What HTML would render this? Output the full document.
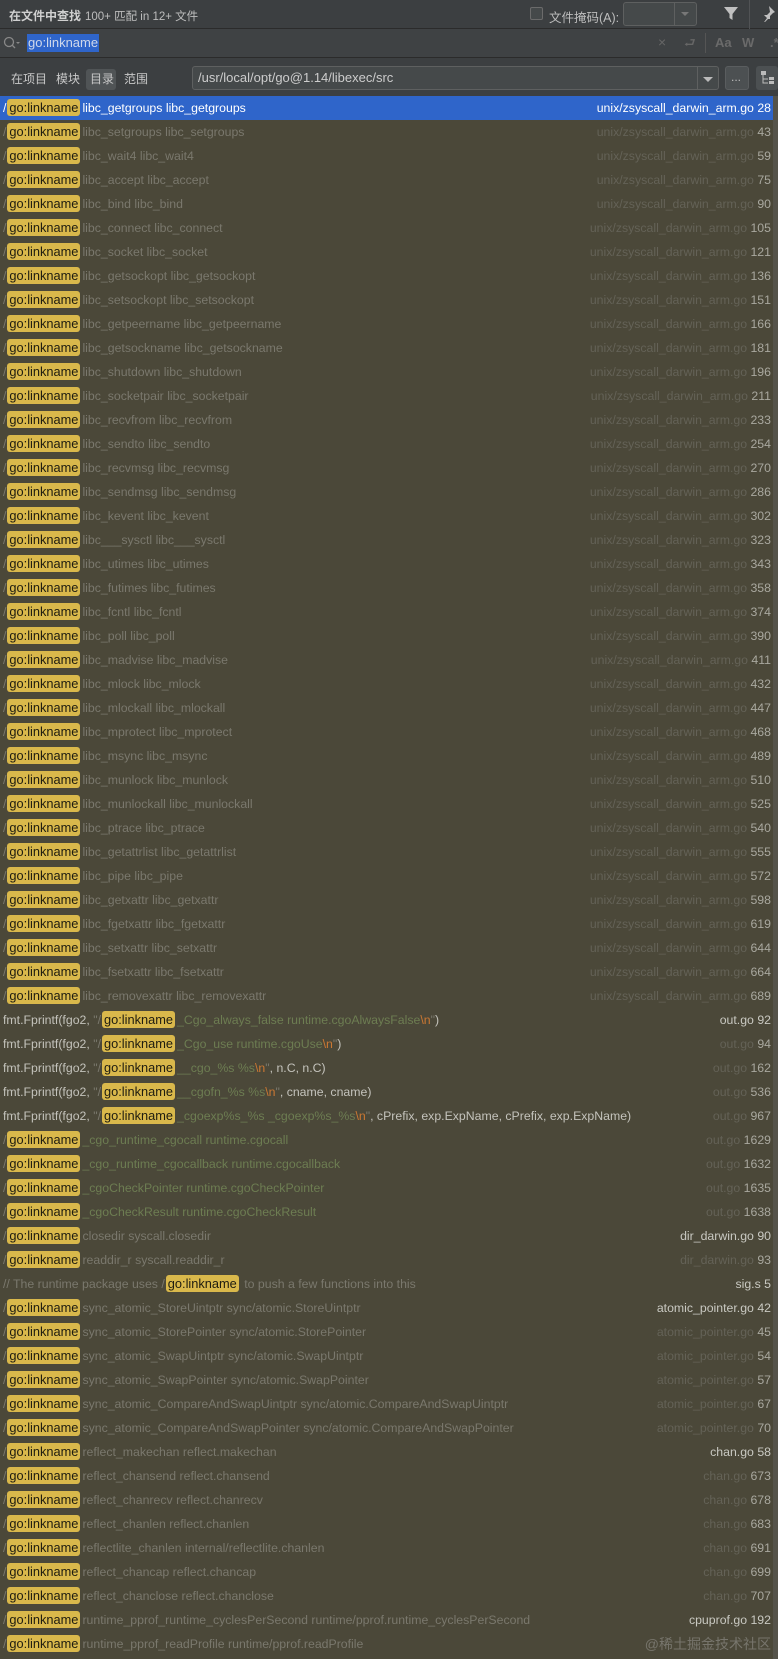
<!DOCTYPE html>
<html><head><meta charset="utf-8"><style>
*{margin:0;padding:0;box-sizing:border-box}
body{width:778px;height:1659px;background:#4b4839;font-family:"Liberation Sans","Noto Sans CJK SC",sans-serif;overflow:hidden;position:relative;color:#bbb}
.hd{position:absolute;left:0;top:0;width:778px;height:29px;background:#3c3f41;border-bottom:1px solid #2b2b2b}
.sr{position:absolute;left:0;top:29px;width:778px;height:29px;background:#3f4244;border-bottom:1px solid #2b2b2b}
.sc{position:absolute;left:0;top:58px;width:778px;height:38px;background:#3c3f41}
.a{position:absolute;white-space:nowrap}
.list{position:absolute;left:0;top:96px;width:773px}
.sb{position:absolute;left:773px;top:96px;width:5px;height:1563px;background:#55534a}
.r{height:24px;line-height:24px;font-size:12.3px;white-space:nowrap;position:relative;color:#7a786d;padding-left:3px}
.r .f{position:absolute;right:2px;top:0;color:#646257}
.r .f i{font-style:normal;color:#a9a89f}
.r .f.w{color:#c9c9c2}
.r .f.w i{color:#c9c9c2}
b{font-weight:normal;background:#d9b84b;color:#1e1c10;border-radius:3px;padding:1px 2px;margin:0 2px 0 1px;font-size:12.8px}
.sel{background:#2f65ca;color:#fff}
.sel .f,.sel .f i{color:#fff}
.k{color:#c4c3bc}.g{color:#6d7d52}.o{color:#cc7832}
</style></head><body>
<div class="hd">
<span class="a" style="left:9px;top:7px;font-size:12px;font-weight:bold;color:#d0d0d0">在文件中查找</span>
<span class="a" style="left:85px;top:8px;font-size:11.5px;color:#bdbdbd">100+ 匹配 in 12+ 文件</span>
<span class="a" style="left:530px;top:7px;width:13px;height:13px;border:1px solid #6b6b6b;border-radius:2px;background:#45494a"></span>
<span class="a" style="left:549px;top:7px;font-size:12.5px;color:#bdbdbd">文件掩码(A):</span>
<span class="a" style="left:623px;top:2px;width:74px;height:24px;border:1px solid #5e6060;border-radius:3px;background:#45494a"></span>
<span class="a" style="left:674px;top:3px;width:1px;height:22px;background:#5e6060"></span>
<span class="a" style="left:681px;top:12px;border-left:4px solid transparent;border-right:4px solid transparent;border-top:4px solid #777"></span>
<svg class="a" style="left:724px;top:6px" width="14" height="15" viewBox="0 0 14 15"><path d="M0 1h14L8.5 8v6L5.5 12V8z" fill="#c0c0c0"/></svg>
<span class="a" style="left:749px;top:0;width:1px;height:29px;background:#515355"></span>
<svg class="a" style="left:760px;top:5px" width="16" height="17" viewBox="0 0 16 17"><path d="M9 1l6 6-2 1-3 3 0 3-2 0-6 6 5-7-3-3 3 0 3-3z" fill="#c0c0c0"/></svg>
</div>
<div class="sr">
<svg class="a" style="left:3px;top:7px" width="18" height="14" viewBox="0 0 18 14"><circle cx="6" cy="6" r="4.5" stroke="#888" stroke-width="1.3" fill="none"/><path d="M9 9l3 3" stroke="#888" stroke-width="1.3"/><path d="M13 6h4l-2 2z" fill="#888"/></svg>
<span class="a" style="left:27px;top:5px;height:18px;line-height:18px;padding:0 1px;font-size:13px;background:#2f65ca;color:#cfd8ea">go:linkname</span>
<span class="a" style="left:658px;top:5px;font-size:14px;color:#666">×</span>
<span class="a" style="left:684px;top:5px;font-size:13px;color:#666">⮐</span>
<span class="a" style="left:705px;top:4px;width:1px;height:20px;background:#555"></span>
<span class="a" style="left:715px;top:6px;font-size:13px;font-weight:bold;color:#6a6a6a">Aa</span>
<span class="a" style="left:742px;top:6px;font-size:13px;font-weight:bold;color:#6a6a6a">W</span>
<span class="a" style="left:770px;top:6px;font-size:13px;font-weight:bold;color:#6a6a6a">.*</span>
</div>
<div class="sc">
<span class="a" style="left:11px;top:12px;font-size:12px;color:#c8c8c8">在项目</span>
<span class="a" style="left:56px;top:12px;font-size:12px;color:#c8c8c8">模块</span>
<span class="a" style="left:86px;top:11px;width:30px;height:21px;background:#505456;border-radius:3px"></span>
<span class="a" style="left:90px;top:12px;font-size:12px;color:#c8c8c8">目录</span>
<span class="a" style="left:124px;top:12px;font-size:12px;color:#c8c8c8">范围</span>
<span class="a" style="left:192px;top:8px;width:527px;height:24px;border:1px solid #5e6060;border-radius:3px;background:#45494a"></span>
<span class="a" style="left:697px;top:9px;width:1px;height:22px;background:#5e6060"></span>
<span class="a" style="left:703px;top:19px;border-left:5px solid transparent;border-right:5px solid transparent;border-top:5px solid #bbb"></span>
<span class="a" style="left:198px;top:12px;font-size:13px;color:#cdcdcd">/usr/local/opt/go@1.14/libexec/src</span>
<span class="a" style="left:725px;top:8px;width:24px;height:24px;border-radius:3px;background:#4c5052;border:1px solid #5a5d5f"></span>
<span class="a" style="left:731px;top:12px;font-size:12px;color:#bbb">...</span>
<span class="a" style="left:756px;top:8px;width:22px;height:24px;border-radius:3px;background:#4c5052"></span>
<svg class="a" style="left:761px;top:13px" width="14" height="14" viewBox="0 0 14 14"><rect x="0" y="0" width="5" height="4" fill="#bbb"/><path d="M2 4v8h5M2 8h5" stroke="#bbb" fill="none"/><rect x="8" y="6" width="5" height="3" fill="#bbb"/><rect x="8" y="10" width="5" height="3" fill="#bbb"/></svg>
</div>
<div class="sb"></div>
<div class="list">
<div class="r sel">/<b>go:linkname</b>libc_getgroups libc_getgroups<span class="f">unix/zsyscall_darwin_arm.go <i>28</i></span></div>
<div class="r">/<b>go:linkname</b>libc_setgroups libc_setgroups<span class="f">unix/zsyscall_darwin_arm.go <i>43</i></span></div>
<div class="r">/<b>go:linkname</b>libc_wait4 libc_wait4<span class="f">unix/zsyscall_darwin_arm.go <i>59</i></span></div>
<div class="r">/<b>go:linkname</b>libc_accept libc_accept<span class="f">unix/zsyscall_darwin_arm.go <i>75</i></span></div>
<div class="r">/<b>go:linkname</b>libc_bind libc_bind<span class="f">unix/zsyscall_darwin_arm.go <i>90</i></span></div>
<div class="r">/<b>go:linkname</b>libc_connect libc_connect<span class="f">unix/zsyscall_darwin_arm.go <i>105</i></span></div>
<div class="r">/<b>go:linkname</b>libc_socket libc_socket<span class="f">unix/zsyscall_darwin_arm.go <i>121</i></span></div>
<div class="r">/<b>go:linkname</b>libc_getsockopt libc_getsockopt<span class="f">unix/zsyscall_darwin_arm.go <i>136</i></span></div>
<div class="r">/<b>go:linkname</b>libc_setsockopt libc_setsockopt<span class="f">unix/zsyscall_darwin_arm.go <i>151</i></span></div>
<div class="r">/<b>go:linkname</b>libc_getpeername libc_getpeername<span class="f">unix/zsyscall_darwin_arm.go <i>166</i></span></div>
<div class="r">/<b>go:linkname</b>libc_getsockname libc_getsockname<span class="f">unix/zsyscall_darwin_arm.go <i>181</i></span></div>
<div class="r">/<b>go:linkname</b>libc_shutdown libc_shutdown<span class="f">unix/zsyscall_darwin_arm.go <i>196</i></span></div>
<div class="r">/<b>go:linkname</b>libc_socketpair libc_socketpair<span class="f">unix/zsyscall_darwin_arm.go <i>211</i></span></div>
<div class="r">/<b>go:linkname</b>libc_recvfrom libc_recvfrom<span class="f">unix/zsyscall_darwin_arm.go <i>233</i></span></div>
<div class="r">/<b>go:linkname</b>libc_sendto libc_sendto<span class="f">unix/zsyscall_darwin_arm.go <i>254</i></span></div>
<div class="r">/<b>go:linkname</b>libc_recvmsg libc_recvmsg<span class="f">unix/zsyscall_darwin_arm.go <i>270</i></span></div>
<div class="r">/<b>go:linkname</b>libc_sendmsg libc_sendmsg<span class="f">unix/zsyscall_darwin_arm.go <i>286</i></span></div>
<div class="r">/<b>go:linkname</b>libc_kevent libc_kevent<span class="f">unix/zsyscall_darwin_arm.go <i>302</i></span></div>
<div class="r">/<b>go:linkname</b>libc___sysctl libc___sysctl<span class="f">unix/zsyscall_darwin_arm.go <i>323</i></span></div>
<div class="r">/<b>go:linkname</b>libc_utimes libc_utimes<span class="f">unix/zsyscall_darwin_arm.go <i>343</i></span></div>
<div class="r">/<b>go:linkname</b>libc_futimes libc_futimes<span class="f">unix/zsyscall_darwin_arm.go <i>358</i></span></div>
<div class="r">/<b>go:linkname</b>libc_fcntl libc_fcntl<span class="f">unix/zsyscall_darwin_arm.go <i>374</i></span></div>
<div class="r">/<b>go:linkname</b>libc_poll libc_poll<span class="f">unix/zsyscall_darwin_arm.go <i>390</i></span></div>
<div class="r">/<b>go:linkname</b>libc_madvise libc_madvise<span class="f">unix/zsyscall_darwin_arm.go <i>411</i></span></div>
<div class="r">/<b>go:linkname</b>libc_mlock libc_mlock<span class="f">unix/zsyscall_darwin_arm.go <i>432</i></span></div>
<div class="r">/<b>go:linkname</b>libc_mlockall libc_mlockall<span class="f">unix/zsyscall_darwin_arm.go <i>447</i></span></div>
<div class="r">/<b>go:linkname</b>libc_mprotect libc_mprotect<span class="f">unix/zsyscall_darwin_arm.go <i>468</i></span></div>
<div class="r">/<b>go:linkname</b>libc_msync libc_msync<span class="f">unix/zsyscall_darwin_arm.go <i>489</i></span></div>
<div class="r">/<b>go:linkname</b>libc_munlock libc_munlock<span class="f">unix/zsyscall_darwin_arm.go <i>510</i></span></div>
<div class="r">/<b>go:linkname</b>libc_munlockall libc_munlockall<span class="f">unix/zsyscall_darwin_arm.go <i>525</i></span></div>
<div class="r">/<b>go:linkname</b>libc_ptrace libc_ptrace<span class="f">unix/zsyscall_darwin_arm.go <i>540</i></span></div>
<div class="r">/<b>go:linkname</b>libc_getattrlist libc_getattrlist<span class="f">unix/zsyscall_darwin_arm.go <i>555</i></span></div>
<div class="r">/<b>go:linkname</b>libc_pipe libc_pipe<span class="f">unix/zsyscall_darwin_arm.go <i>572</i></span></div>
<div class="r">/<b>go:linkname</b>libc_getxattr libc_getxattr<span class="f">unix/zsyscall_darwin_arm.go <i>598</i></span></div>
<div class="r">/<b>go:linkname</b>libc_fgetxattr libc_fgetxattr<span class="f">unix/zsyscall_darwin_arm.go <i>619</i></span></div>
<div class="r">/<b>go:linkname</b>libc_setxattr libc_setxattr<span class="f">unix/zsyscall_darwin_arm.go <i>644</i></span></div>
<div class="r">/<b>go:linkname</b>libc_fsetxattr libc_fsetxattr<span class="f">unix/zsyscall_darwin_arm.go <i>664</i></span></div>
<div class="r">/<b>go:linkname</b>libc_removexattr libc_removexattr<span class="f">unix/zsyscall_darwin_arm.go <i>689</i></span></div>
<div class="r"><span class="k">fmt.Fprintf(fgo2, </span>"/<b>go:linkname</b><span class="g">_Cgo_always_false runtime.cgoAlwaysFalse</span><span class="o">\n</span>"<span class="k">)</span><span class="f w">out.go <i>92</i></span></div>
<div class="r"><span class="k">fmt.Fprintf(fgo2, </span>"/<b>go:linkname</b><span class="g">_Cgo_use runtime.cgoUse</span><span class="o">\n</span>"<span class="k">)</span><span class="f">out.go <i>94</i></span></div>
<div class="r"><span class="k">fmt.Fprintf(fgo2, </span>"/<b>go:linkname</b><span class="g">__cgo_%s %s</span><span class="o">\n</span>"<span class="k">, n.C, n.C)</span><span class="f">out.go <i>162</i></span></div>
<div class="r"><span class="k">fmt.Fprintf(fgo2, </span>"/<b>go:linkname</b><span class="g">__cgofn_%s %s</span><span class="o">\n</span>"<span class="k">, cname, cname)</span><span class="f">out.go <i>536</i></span></div>
<div class="r"><span class="k">fmt.Fprintf(fgo2, </span>"/<b>go:linkname</b><span class="g">_cgoexp%s_%s _cgoexp%s_%s</span><span class="o">\n</span>"<span class="k">, cPrefix, exp.ExpName, cPrefix, exp.ExpName)</span><span class="f">out.go <i>967</i></span></div>
<div class="r">/<b>go:linkname</b><span class="g">_cgo_runtime_cgocall runtime.cgocall</span><span class="f">out.go <i>1629</i></span></div>
<div class="r">/<b>go:linkname</b><span class="g">_cgo_runtime_cgocallback runtime.cgocallback</span><span class="f">out.go <i>1632</i></span></div>
<div class="r">/<b>go:linkname</b><span class="g">_cgoCheckPointer runtime.cgoCheckPointer</span><span class="f">out.go <i>1635</i></span></div>
<div class="r">/<b>go:linkname</b><span class="g">_cgoCheckResult runtime.cgoCheckResult</span><span class="f">out.go <i>1638</i></span></div>
<div class="r">/<b>go:linkname</b>closedir syscall.closedir<span class="f w">dir_darwin.go <i>90</i></span></div>
<div class="r">/<b>go:linkname</b>readdir_r syscall.readdir_r<span class="f">dir_darwin.go <i>93</i></span></div>
<div class="r">// The runtime package uses /<b>go:linkname</b> to push a few functions into this<span class="f w">sig.s <i>5</i></span></div>
<div class="r">/<b>go:linkname</b>sync_atomic_StoreUintptr sync/atomic.StoreUintptr<span class="f w">atomic_pointer.go <i>42</i></span></div>
<div class="r">/<b>go:linkname</b>sync_atomic_StorePointer sync/atomic.StorePointer<span class="f">atomic_pointer.go <i>45</i></span></div>
<div class="r">/<b>go:linkname</b>sync_atomic_SwapUintptr sync/atomic.SwapUintptr<span class="f">atomic_pointer.go <i>54</i></span></div>
<div class="r">/<b>go:linkname</b>sync_atomic_SwapPointer sync/atomic.SwapPointer<span class="f">atomic_pointer.go <i>57</i></span></div>
<div class="r">/<b>go:linkname</b>sync_atomic_CompareAndSwapUintptr sync/atomic.CompareAndSwapUintptr<span class="f">atomic_pointer.go <i>67</i></span></div>
<div class="r">/<b>go:linkname</b>sync_atomic_CompareAndSwapPointer sync/atomic.CompareAndSwapPointer<span class="f">atomic_pointer.go <i>70</i></span></div>
<div class="r">/<b>go:linkname</b>reflect_makechan reflect.makechan<span class="f w">chan.go <i>58</i></span></div>
<div class="r">/<b>go:linkname</b>reflect_chansend reflect.chansend<span class="f">chan.go <i>673</i></span></div>
<div class="r">/<b>go:linkname</b>reflect_chanrecv reflect.chanrecv<span class="f">chan.go <i>678</i></span></div>
<div class="r">/<b>go:linkname</b>reflect_chanlen reflect.chanlen<span class="f">chan.go <i>683</i></span></div>
<div class="r">/<b>go:linkname</b>reflectlite_chanlen internal/reflectlite.chanlen<span class="f">chan.go <i>691</i></span></div>
<div class="r">/<b>go:linkname</b>reflect_chancap reflect.chancap<span class="f">chan.go <i>699</i></span></div>
<div class="r">/<b>go:linkname</b>reflect_chanclose reflect.chanclose<span class="f">chan.go <i>707</i></span></div>
<div class="r">/<b>go:linkname</b>runtime_pprof_runtime_cyclesPerSecond runtime/pprof.runtime_cyclesPerSecond<span class="f w">cpuprof.go <i>192</i></span></div>
<div class="r">/<b>go:linkname</b>runtime_pprof_readProfile runtime/pprof.readProfile<span class="f" style="font-size:14px;color:#77756c">@稀土掘金技术社区</span></div>
</div>
</body></html>
